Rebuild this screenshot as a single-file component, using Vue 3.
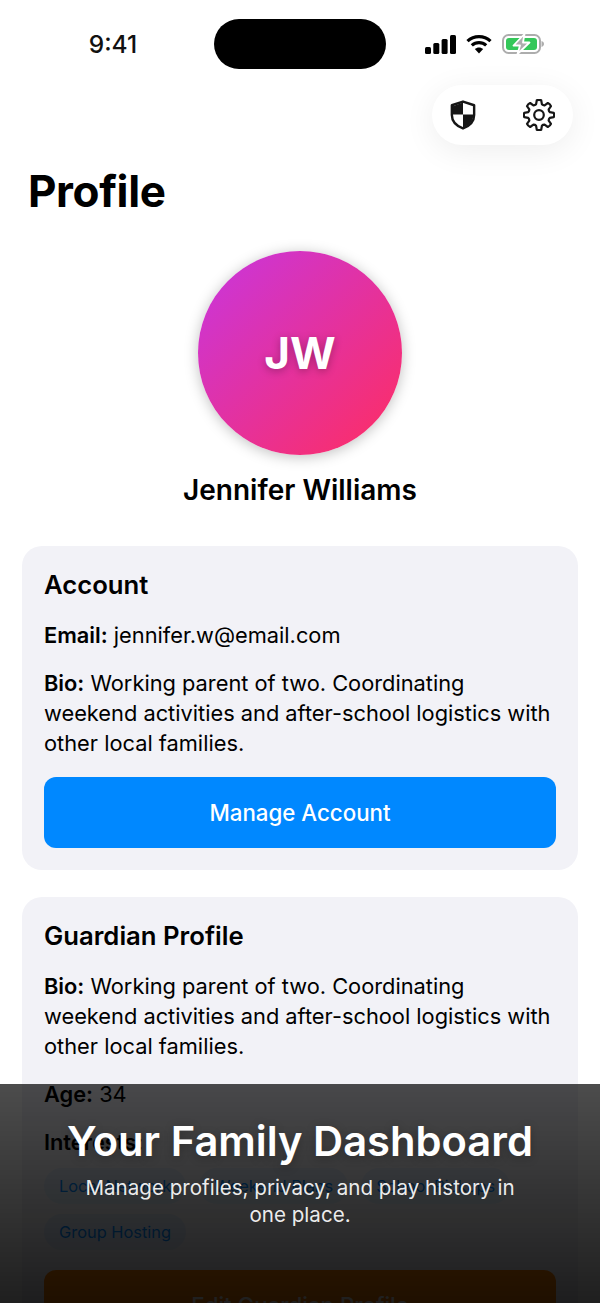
<template>
  <div class="screen">
    <header class="status">
      <span class="time">9:41</span>
      <div class="island"></div>
      <div class="indicators">
        <svg width="31" height="19" viewBox="0 0 31 19"><rect x="0" y="12" width="6" height="7" rx="1.5"/><rect x="8.3" y="8" width="6" height="11" rx="1.5"/><rect x="16.6" y="4" width="6" height="15" rx="1.5"/><rect x="25" y="0" width="6" height="19" rx="1.5"/></svg>
        <svg class="wifi" width="26" height="20" viewBox="0 0 26 20" fill="none" stroke="#000" stroke-width="3.2"><path d="M1.5 7.2C8 1 18 1 24.500 7.200"/><path d="M5.800 11.400C10 7.600 16 7.600 20.200 11.400"/><path d="M13 19.500L8.800 15.100C11.200 13 14.800 13 17.200 15.100Z" fill="#000" stroke="none"/></svg>
        <svg width="42" height="22" viewBox="0 0 42 22"><rect x="1" y="2" width="37" height="18" rx="5.500" fill="#fff" stroke="#adadad" stroke-width="2"/><rect x="4" y="5" width="31" height="12" rx="3" fill="#34c759"/><path d="M39.500 8c1.500.4 2.500 1.600 2.500 3s-1 2.600-2.500 3z" fill="#adadad"/><path d="M22.500 1L11.500 12.500H18L15.500 21L27.500 9.500H21Z" fill="#adadad" stroke="#fff" stroke-width="1.800" stroke-linejoin="round"/></svg>
      </div>
    </header>

    <div class="actions-row">
      <div class="actions">
        <svg width="26" height="30" viewBox="0 0 28 32"><path d="M14 1.500L26 5.500V16C26 23.500 20.500 28 14 30.500C7.500 28 2 23.500 2 16V5.500Z" fill="#fff" stroke="#161616" stroke-width="2.600" stroke-linejoin="round"/><path d="M14 2.500V15.500H3V6.500ZM14 15.500H25V17C24.500 23 20 27.500 14 29.500Z" fill="#161616"/></svg>
        <svg width="32" height="32" viewBox="0 0 32 32" fill="none" stroke="#161616" stroke-width="2.200" stroke-linejoin="round"><path :d="gear"/><circle cx="16" cy="16" r="4.800"/></svg>
      </div>
    </div>

    <h1>Profile</h1>

    <div class="hero">
      <div class="avatar">JW</div>
      <div class="name">Jennifer Williams</div>
    </div>

    <section class="card">
      <h2>Account</h2>
      <p><b>Email:</b> jennifer.w@email.com</p>
      <p><b>Bio:</b> {{ bio }}</p>
      <button class="btn blue">Manage Account</button>
    </section>

    <section class="card">
      <h2>Guardian Profile</h2>
      <p><b>Bio:</b> {{ bio }}</p>
      <p><b>Age:</b> 34</p>
      <p><b>Interests:</b></p>
      <div class="tags">
        <span v-for="t in tags" :key="t" class="tag">{{ t }}</span>
      </div>
      <button class="btn orange">Edit Guardian Profile</button>
    </section>

    <div class="overlay">
      <div class="ov-title">Your Family Dashboard</div>
      <div class="ov-sub">Manage profiles, privacy, and play history in one place.</div>
    </div>
  </div>
</template>

<script setup>
const bio = 'Working parent of two. Coordinating weekend activities and after-school logistics with other local families.'
const tags = ['Local Network', 'Weekend Plans', 'School Pickups', 'Group Hosting']

function polar(r, deg) {
  const a = (deg - 90) * Math.PI / 180
  return (16 + r * Math.cos(a)).toFixed(2) + ' ' + (16 + r * Math.sin(a)).toFixed(2)
}
const gear = Array.from({ length: 8 }, (_, i) => {
  const c = i * 45
  const start = polar(11.2, c - 15)
  const tipA = polar(14.9, c - 8.5)
  const tipB = polar(14.9, c + 8.5)
  const end = polar(11.2, c + 15)
  const next = polar(11.2, c + 30)
  return `${i === 0 ? 'M' : 'L'}${start} L${tipA} Q${polar(15.6, c)} ${tipB} L${end} Q${polar(10.4, c + 22.5)} ${next}`
}).join(' ') + ' Z'
</script>

<style>
html, body { margin: 0; background: #fff; }
</style>

<style scoped>
.screen { position: relative; width: 600px; height: 1303px; overflow: hidden; background: #fff; font-family: Inter, "Noto Sans", sans-serif; color: #000; }
.status { height: 85px; box-sizing: border-box; padding-top: 19px; display: flex; align-items: flex-start; }
.time { width: 214px; text-align: center; padding-left: 12px; box-sizing: border-box; font-size: 24.500px; font-weight: 500; line-height: 51px; color: #111; }
.island { width: 172px; height: 50px; border-radius: 25px; background: #000; }
.indicators { display: flex; align-items: center; gap: 10px; height: 50px; margin-left: 39px; }
.wifi { margin-left: 0; }
.actions-row { display: flex; justify-content: flex-end; padding-right: 27px; }
.actions { width: 141px; height: 60px; box-sizing: border-box; border-radius: 30px; background: #fff; box-shadow: 0 6px 32px rgba(0,0,0,.07); display: flex; align-items: center; justify-content: space-between; padding: 0 18px 0 18px; }
h1 { margin: 16px 0 0 28px; font-size: 44px; line-height: 60px; font-weight: 700; letter-spacing: -.4px; }
.hero { display: flex; flex-direction: column; align-items: center; margin-top: 30px; }
.avatar { width: 204px; height: 204px; border-radius: 50%; background: linear-gradient(135deg, #c736e0, #ff2d60); box-shadow: 0 2px 14px rgba(0,0,0,.25); color: #fff; font-size: 44px; font-weight: 700; display: flex; align-items: center; justify-content: center; text-shadow: 0 2px 8px rgba(0,0,0,.3); }
.name { margin-top: 16px; font-size: 28px; line-height: 38px; font-weight: 600; }
.card { margin: 37px 22px 0; padding: 22px; background: #f2f2f7; border-radius: 20px; }
.card + .card { margin-top: 27px; }
h2 { margin: 0; font-size: 25.700px; line-height: 34px; font-weight: 600; }
p { margin: 18px 0 0; font-size: 21.800px; line-height: 30px; }
p b { font-weight: 600; }
.btn { display: block; width: 100%; height: 71px; margin-top: 19px; border: 0; border-radius: 12px; color: #fff; font: 500 22.300px Inter, sans-serif; }
.blue { background: #0088ff; }
.orange { background: #ff8000; margin-top: 20px; }
.tags { display: flex; flex-wrap: wrap; gap: 10px 13px; margin-top: 11px; }
.tag { height: 36px; line-height: 36px; padding: 0 15px; border-radius: 18px; background: rgba(0,136,255,.08); color: #0088ff; font-size: 16.400px; }
.overlay { position: absolute; left: 0; right: 0; bottom: 0; height: 219px; box-sizing: border-box; padding: 30px 60px 0; text-align: center; color: #fff; background: linear-gradient(rgba(0,0,0,.7), rgba(0,0,0,.88)); border-top: 1px solid rgba(255,255,255,.2); }
.ov-title { font-size: 41.700px; line-height: 52px; font-weight: 600; white-space: nowrap; margin: 0 -30px; text-shadow: 0 2px 10px rgba(0,0,0,.25); }
.ov-sub { margin-top: 7px; font-size: 20.600px; line-height: 27px; padding: 0 20px; color: rgba(255,255,255,.92); }
</style>
